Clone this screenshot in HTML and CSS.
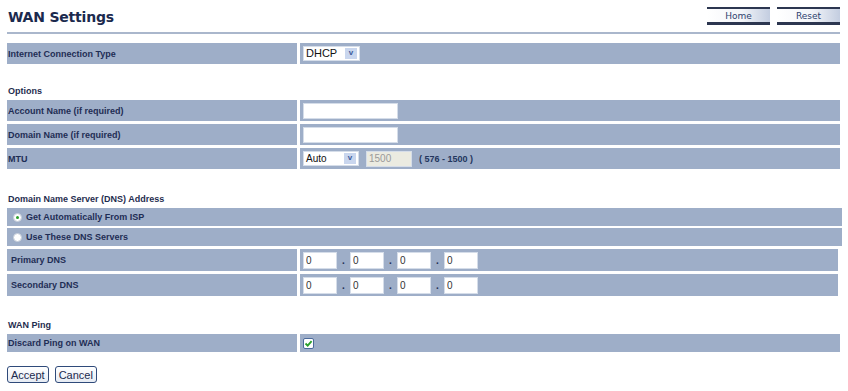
FILE: index.html
```html
<!DOCTYPE html>
<html lang="en">
<head>
  <meta charset="UTF-8">
  <title>WAN Settings</title>
  <link rel="stylesheet" href="styles.css">
</head>
<body>
  <div class="page">
    <header class="top">
      <h1>WAN Settings</h1>
      <div class="top-buttons">
        <button class="nav-btn">Home</button>
        <button class="nav-btn">Reset</button>
      </div>
    </header>

    <div class="rows first">
      <div class="row">
        <div class="label">Internet Connection Type</div>
        <div class="value">
          <span class="select wide">DHCP</span>
        </div>
      </div>
    </div>

    <h2 class="section options">Options</h2>
    <div class="rows">
      <div class="row">
        <div class="label">Account Name (if required)</div>
        <div class="value"><input class="text" type="text"></div>
      </div>
      <div class="row">
        <div class="label">Domain Name (if required)</div>
        <div class="value"><input class="text" type="text"></div>
      </div>
      <div class="row">
        <div class="label">MTU</div>
        <div class="value">
          <span class="select">Auto</span>
          <input class="text mtu" type="text" value="1500" disabled>
          <span class="hint">( 576 - 1500 )</span>
        </div>
      </div>
    </div>

    <h2 class="section dns">Domain Name Server (DNS) Address</h2>
    <div class="rows tight">
      <div class="row full">
        <span class="radio on"></span>Get Automatically From ISP
      </div>
      <div class="row full">
        <span class="radio"></span>Use These DNS Servers
      </div>
    </div>
    <div class="rows ip-rows">
      <div class="row ip">
        <div class="label">Primary DNS</div>
        <div class="value">
          <input class="octet" type="text" value="0"><span class="dot">.</span><input class="octet" type="text" value="0"><span class="dot">.</span><input class="octet" type="text" value="0"><span class="dot">.</span><input class="octet" type="text" value="0">
        </div>
      </div>
      <div class="row ip">
        <div class="label">Secondary DNS</div>
        <div class="value">
          <input class="octet" type="text" value="0"><span class="dot">.</span><input class="octet" type="text" value="0"><span class="dot">.</span><input class="octet" type="text" value="0"><span class="dot">.</span><input class="octet" type="text" value="0">
        </div>
      </div>
    </div>

    <h2 class="section ping">WAN Ping</h2>
    <div class="rows">
      <div class="row small">
        <div class="label">Discard Ping on WAN</div>
        <div class="value">
          <span class="check">
            <svg width="9" height="9" viewBox="0 0 9 9"><path d="M1.5 4.5 L3.7 6.7 L7.6 2.2" fill="none" stroke="#2aa02a" stroke-width="1.8"/></svg>
          </span>
        </div>
      </div>
    </div>

    <div class="actions">
      <button class="form-btn">Accept</button>
      <button class="form-btn">Cancel</button>
    </div>
  </div>
</body>
</html>
```

FILE: styles.css
```css
body {
  margin: 0;
  background: #fff;
  font-family: "Liberation Sans", Arial, sans-serif;
  color: #1e2d55;
}

.page {
  width: 833px;
  margin-left: 7px;
}

.top {
  display: flex;
  justify-content: space-between;
  align-items: flex-start;
  height: 32px;
  border-bottom: 2px solid #aab7cc;
}

.top h1 {
  margin: 9px 0 0 1px;
  font-family: "DejaVu Sans", Verdana, sans-serif;
  font-size: 14px;
  font-weight: bold;
  color: #1b2a4e;
  letter-spacing: -0.2px;
}

.top-buttons {
  display: flex;
  gap: 7px;
  margin-top: 7px;
}

.nav-btn {
  width: 63px;
  height: 18px;
  padding: 0;
  background: linear-gradient(to right, #ffffff 0%, #f3f5f9 55%, #c3cde0 100%);
  border: none;
  border-top: 2px solid #2c3650;
  border-bottom: 3px solid #2c3650;
  font-family: "DejaVu Sans", sans-serif;
  font-size: 9px;
  color: #2e426e;
}

.rows {
  display: flex;
  flex-direction: column;
  gap: 3px;
}

.rows.first {
  margin-top: 9px;
}

.row {
  display: flex;
  gap: 3px;
  height: 21px;
  font-size: 9px;
  font-weight: bold;
}

.row .label {
  width: 290px;
  background: #9eaec8;
  display: flex;
  align-items: center;
  padding-left: 1px;
  box-sizing: border-box;
}

.row .value {
  flex: 1;
  background: #9eaec8;
  display: flex;
  align-items: center;
  padding-left: 3px;
}

.section {
  margin: 0;
  height: 13px;
  font-size: 9px;
  font-weight: bold;
  color: #1f2d4f;
  padding-left: 1px;
  display: flex;
  align-items: center;
}

.section.options {
  margin: 20px 0 3px;
}

.section.dns {
  margin: 23px 0 3px;
}

.section.ping {
  margin: 22px 0 3px;
}

.select {
  position: relative;
  width: 56px;
  height: 15px;
  box-sizing: border-box;
  background: #fff;
  border: 1px solid #d5dde9;
  font-size: 10px;
  font-weight: normal;
  color: #111;
  padding-left: 2px;
  line-height: 13px;
}

.select.wide {
  width: 57px;
  font-size: 11px;
}

.select::after {
  content: "v";
  position: absolute;
  right: 2px;
  top: 1px;
  width: 12px;
  height: 11px;
  background: #c9d6ee;
  color: #3c5a9a;
  font-size: 8px;
  font-weight: bold;
  line-height: 10px;
  text-align: center;
}

.text {
  width: 95px;
  height: 16px;
  box-sizing: border-box;
  border: 1px solid #d5dde9;
  background: #fff;
  padding: 0 2px;
  font-family: "Liberation Sans", Arial, sans-serif;
  font-size: 10px;
}

.text.mtu {
  width: 46px;
  margin-left: 7px;
  background: #ebebe1;
  color: #9a9a9a;
}

.hint {
  margin-left: 7px;
  color: #23365e;
}

.rows.tight {
  gap: 2px;
}

.row.full {
  height: 18px;
  background: #9eaec8;
  align-items: center;
  padding-left: 6px;
  gap: 4px;
  margin-right: -2px;
}

.radio {
  width: 9px;
  height: 9px;
  border-radius: 50%;
  background: #fff;
  border: 1px solid #c4ccd8;
  box-sizing: border-box;
  position: relative;
}

.radio.on::after {
  content: "";
  position: absolute;
  left: 2px;
  top: 2px;
  width: 3px;
  height: 3px;
  border-radius: 50%;
  background: #2aa02a;
}

.ip-rows {
  margin-top: 3px;
}

.row.ip {
  height: 22px;
  margin-right: 2px;
}

.row.ip .label {
  padding-left: 4px;
}

.octet {
  width: 34px;
  height: 17px;
  box-sizing: border-box;
  border: 1px solid #d5dde9;
  background: #fff;
  padding: 0 2px;
  font-family: "Liberation Sans", Arial, sans-serif;
  font-size: 10px;
  color: #333;
}

.dot {
  width: 13px;
  text-align: center;
  font-size: 10px;
  color: #1e2d55;
}

.row.small {
  height: 18px;
}

.check {
  width: 11px;
  height: 11px;
  box-sizing: border-box;
  border: 1px solid #4b6a9b;
  background: #fff;
  border-radius: 2px;
  display: flex;
  align-items: center;
  justify-content: center;
}

.actions {
  display: flex;
  gap: 6px;
  margin-top: 14px;
}

.form-btn {
  height: 17px;
  padding: 0 3px;
  background: linear-gradient(#ffffff, #e6ebf3);
  border: 1px solid #2f4a7a;
  border-radius: 3px;
  font-family: "Liberation Sans", Arial, sans-serif;
  font-size: 11px;
  color: #1b2a4e;
}
```
